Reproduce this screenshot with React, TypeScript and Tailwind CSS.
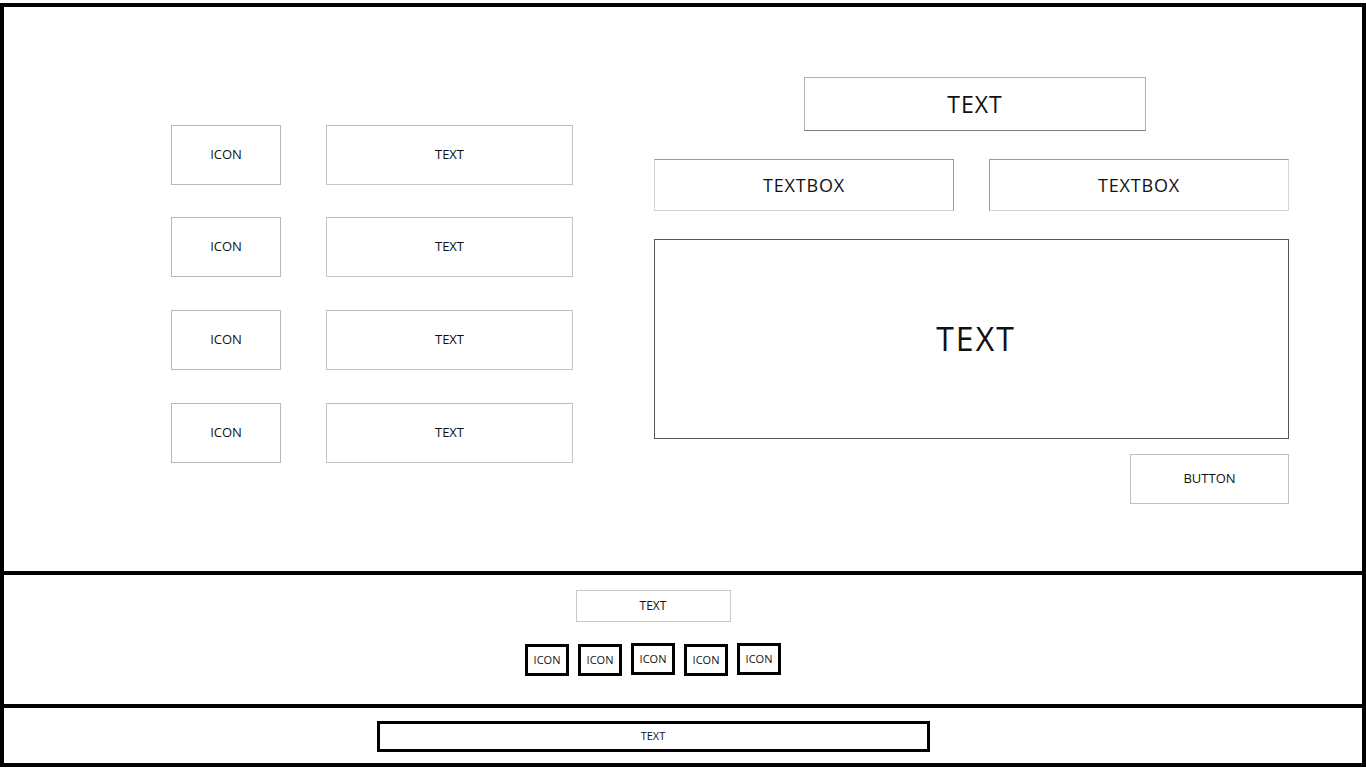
import React from "react";

const rows = ["", "mt-[32px]", "mt-[33px]", "mt-[33px]"];
const footerIcons = ["mt-[1px]", "mt-[1px]", "", "mt-[1px]", ""];

export default function App() {
  return (
    <div
      className="h-[768px] w-[1366px] overflow-hidden bg-white pt-[3px] text-[#111]"
      style={{ fontFamily: '"Open Sans", "Liberation Sans", sans-serif' }}
    >
      {/* main area */}
      <section className="flex h-[572px] items-start border-4 border-black">
        <div className="ml-[167px] mt-[118px] flex flex-col">
          {rows.map((m, r) => (
            <div key={r} className={`flex h-[60px] gap-[45px] ${m}`}>
              <div className="flex w-[110px] items-center justify-center border border-[#b8b8b8] text-[13px]">
                ICON
              </div>
              <div className="flex w-[247px] items-center justify-center border border-[#c4c4c4] border-t-[#bdbdbd] text-[13px]">
                TEXT
              </div>
            </div>
          ))}
        </div>

        <div className="ml-[81px] mt-[70px] flex w-[635px] flex-col">
          <div className="ml-[150px] flex h-[54px] w-[342px] items-center justify-center border border-[#b0b0b0] border-b-[#808080] text-[23px] tracking-[1px]">
            TEXT
          </div>
          <div className="mt-[28px] flex gap-[35px]">
            <div className="flex h-[52px] w-[300px] items-center justify-center border border-[#d4d4d4] border-t-[#999] border-r-[#999] text-[18px] tracking-[0.8px]">
              TEXTBOX
            </div>
            <div className="flex h-[52px] w-[300px] items-center justify-center border border-[#d4d4d4] border-t-[#999] border-l-[#999] text-[18px] tracking-[0.8px]">
              TEXTBOX
            </div>
          </div>
          <div className="mt-[28px] flex h-[200px] items-center justify-center border border-[#555] pl-[9px] text-[32px] tracking-[2px]">
            TEXT
          </div>
          <div className="mt-[15px] flex h-[50px] w-[159px] items-center justify-center self-end border border-[#c0c0c0] text-[13px]">
            BUTTON
          </div>
        </div>
      </section>

      {/* social */}
      <section className="flex h-[133px] flex-col items-center border-x-4 border-b-4 border-black pr-[60px]">
        <div className="mt-[15px] flex h-[32px] w-[155px] items-center justify-center border border-[#c8c8c8] text-[12px]">
          TEXT
        </div>
        <div className="mt-[21px] flex items-start gap-[9px]">
          {footerIcons.map((m, i) => (
            <div
              key={i}
              className={`flex h-[32px] w-[44px] items-center justify-center border-[3px] border-black text-[11px] ${m}`}
            >
              ICON
            </div>
          ))}
        </div>
      </section>

      {/* bottom bar */}
      <section className="flex h-[59px] items-start justify-center border-x-4 border-b-4 border-black pr-[60px]">
        <div className="mt-[13px] flex h-[31px] w-[553px] items-center justify-center border-[3px] border-black text-[11px]">
          TEXT
        </div>
      </section>
    </div>
  );
}
